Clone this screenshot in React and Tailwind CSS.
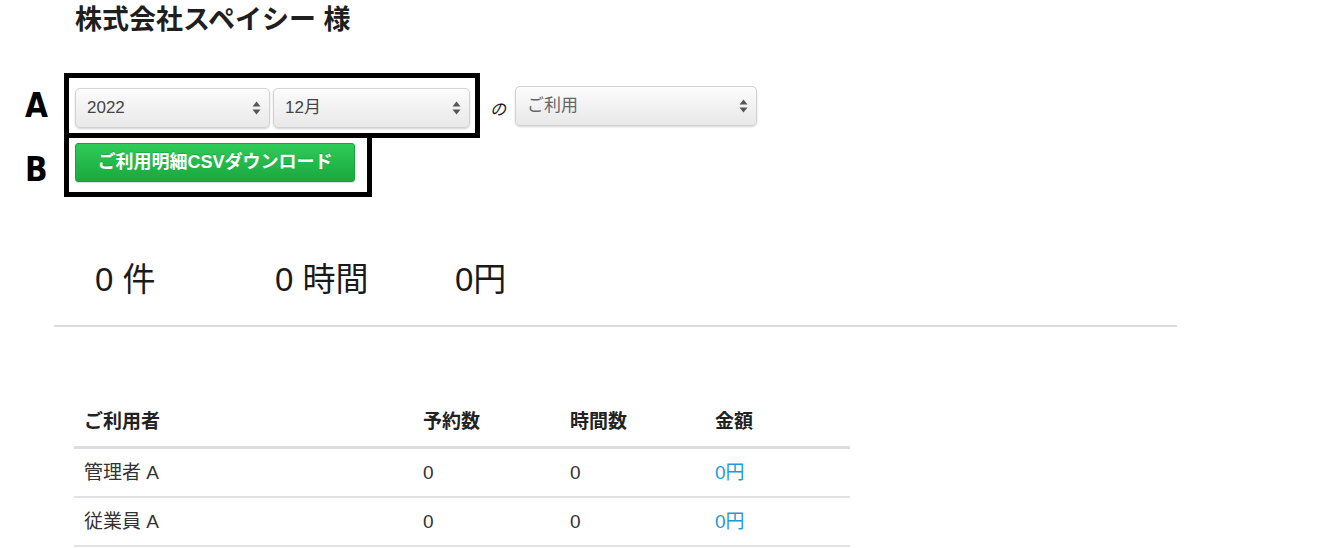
import React from "react";

function Arrows() {
  return (
    <svg width="9" height="14" viewBox="0 0 9 14" className="shrink-0">
      <path d="M4.5 0.5 L8.5 5.5 L0.5 5.5 Z" fill="#555" />
      <path d="M4.5 13.5 L8.5 8.5 L0.5 8.5 Z" fill="#555" />
    </svg>
  );
}

function Select({ value, width, color }) {
  return (
    <div
      className={`flex h-[40px] ${width} items-center justify-between rounded-[5px] border border-[#d2d2d2] bg-linear-to-b from-[#fcfcfc] to-[#e8e8e8] pl-[11px] pr-[8px] shadow-[0_1px_2px_rgba(0,0,0,0.18),inset_0_1px_0_#ffffff] text-[17px] ${color}`}
    >
      <span>{value}</span>
      <Arrows />
    </div>
  );
}

const rows = [
  { name: "管理者 A", res: "0", hours: "0", amount: "0円" },
  { name: "従業員 A", res: "0", hours: "0", amount: "0円" },
];

export default function App() {
  return (
    <div className="relative h-[548px] w-[1328px] overflow-hidden bg-white font-['Liberation_Sans','Noto_Sans_CJK_JP',sans-serif] text-[#222]">
      <h1 className="ml-[75px] pt-[4px] text-[27px] font-bold leading-[33px] text-[#1f1f1f]">
        株式会社スペイシー 様
      </h1>

      <div className="mt-[36px] pl-[25px]">
        {/* Row A */}
        <div className="flex items-center">
          <div className="w-[39px] font-['DejaVu_Sans_Condensed','DejaVu_Sans',sans-serif] text-[33px] font-bold leading-none text-black">
            A
          </div>
          <div className="flex gap-[3px] border-[5px] border-black pt-[10px] pb-[5px] pl-[6px] pr-[5px]">
            <Select value="2022" width="w-[195px]" color="text-[#444]" />
            <Select value="12月" width="w-[197px]" color="text-[#444]" />
          </div>
          <span className="ml-[10px] mt-[8px] text-[16px] italic text-[#222]">の</span>
          <div className="ml-[9px]">
            <Select value="ご利用" width="w-[242px]" color="text-[#666]" />
          </div>
        </div>

        {/* Row B */}
        <div className="flex items-center">
          <div className="w-[39px] pt-[4px] font-['DejaVu_Sans_Condensed','DejaVu_Sans',sans-serif] text-[33px] font-bold leading-none text-black">
            B
          </div>
          <div className="border-[5px] border-t-0 border-black pt-[5px] pb-[10px] pl-[6px] pr-[12px]">
            <button className="flex h-[39px] w-[280px] items-center justify-center rounded-[3px] border border-[#18a23c] bg-linear-to-b from-[#2fcb58] to-[#1aa83f] text-[18px] font-bold text-white shadow-[0_1px_1px_rgba(0,0,0,0.15)] [text-shadow:0_-1px_0_rgba(0,0,0,0.15)]">
              ご利用明細CSVダウンロード
            </button>
          </div>
        </div>
      </div>

      {/* Stats */}
      <div className="mt-[63px] flex pl-[95px] text-[33px] leading-[40px] text-[#1a1a1a]">
        <div className="w-[180px]">0 件</div>
        <div className="w-[180px]">0 時間</div>
        <div className="w-[180px]">0円</div>
      </div>

      <div className="ml-[54px] mt-[25px] h-[2px] w-[1123px] bg-[#dcdcdc]" />

      {/* Table */}
      <div className="ml-[74px] mt-[74px] w-[776px] text-[19px] leading-[23px] text-[#333]">
        <div className="grid grid-cols-[339px_147px_145px_145px] border-b-[3px] border-[#dddddd] font-bold text-[#222]">
          <div className="px-[10px] pt-[9px] pb-[13px]">ご利用者</div>
          <div className="px-[10px] pt-[9px] pb-[13px]">予約数</div>
          <div className="px-[10px] pt-[9px] pb-[13px]">時間数</div>
          <div className="px-[10px] pt-[9px] pb-[13px]">金額</div>
        </div>
        {rows.map((r) => (
          <div
            key={r.name}
            className="grid grid-cols-[339px_147px_145px_145px] border-b-2 border-[#e2e2e2]"
          >
            <div className="px-[10px] py-[12px]">{r.name}</div>
            <div className="px-[10px] py-[12px]">{r.res}</div>
            <div className="px-[10px] py-[12px]">{r.hours}</div>
            <div className="px-[10px] py-[12px] text-[#1e9bd7]">{r.amount}</div>
          </div>
        ))}
      </div>
    </div>
  );
}
